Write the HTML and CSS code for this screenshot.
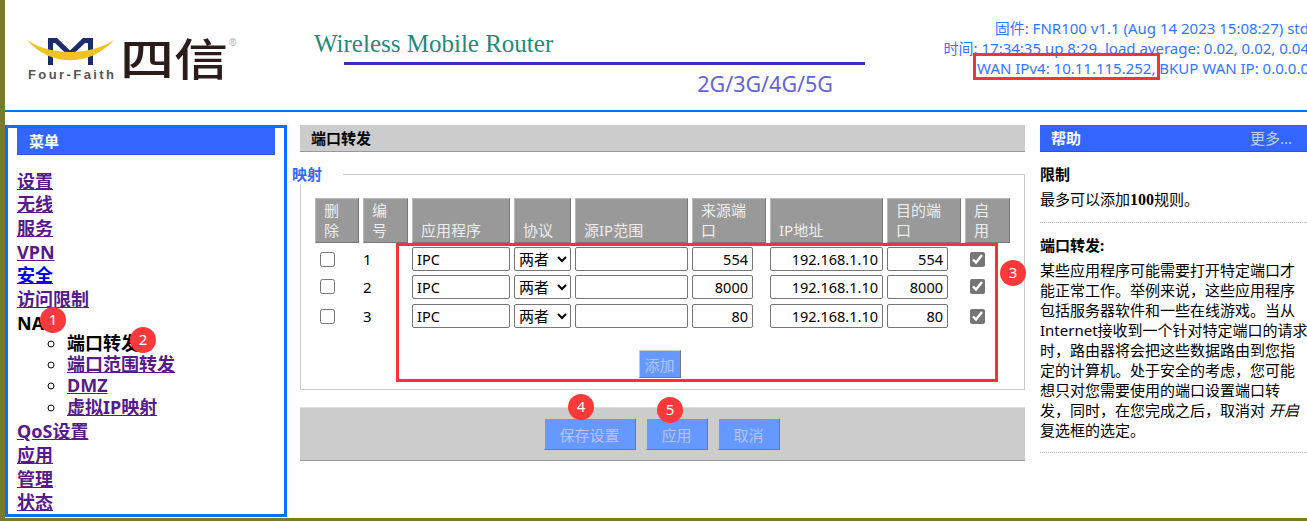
FILE: index.html

```html
<!DOCTYPE html>
<html lang="zh-CN">
<head>
    <meta charset="UTF-8">
    <meta name="viewport" content="width=device-width, initial-scale=1.0">
    <title>端口转发</title>
    <link rel="stylesheet" href="styles.css">
</head>
<body>
<div class="page">

    <!-- 顶部 -->
    <div class="top">
        <svg class="logo" width="240" height="110" viewBox="0 0 240 110">
            <path d="M50.500 65V40.500H56L70 54L84 40.500H90.500V65" fill="none" stroke="#1c2a6e" stroke-width="5"/>
            <path d="M27 40C50 67 90 67 114 40C90 56 50 56 27 40Z" fill="#efc322"/>
            <text class="logo-en" x="28" y="79" textLength="86">Four-Faith</text>
            <text class="logo-cn" x="120" y="76" textLength="108" lengthAdjust="spacingAndGlyphs">四信</text>
            <text class="logo-r" x="229" y="46">®</text>
        </svg>
        <div class="banner">
            <div class="banner-title">Wireless Mobile Router</div>
            <div class="banner-rule"></div>
            <div class="banner-sub">2G/3G/4G/5G</div>
        </div>
        <div class="status">
            <div>固件: FNR100 v1.1 (Aug 14 2023 15:08:27) std</div>
            <div>时间: 17:34:35 up 8:29, load average: 0.02, 0.02, 0.04</div>
            <div>WAN IPv4: 10.11.115.252, BKUP WAN IP: 0.0.0.0</div>
        </div>
    </div>

    <div class="content">

        <!-- 菜单 -->
        <div class="side">
            <div class="side-head">菜单</div>
            <div class="nav">
                <div><a href="#">设置</a></div>
                <div><a href="#">无线</a></div>
                <div><a href="#">服务</a></div>
                <div><a href="#">VPN</a></div>
                <div><a href="#" class="fresh">安全</a></div>
                <div><a href="#">访问限制</a></div>
                <div>NAT</div>
                <ul>
                    <li>端口转发</li>
                    <li><a href="#">端口范围转发</a></li>
                    <li><a href="#">DMZ</a></li>
                    <li><a href="#">虚拟IP映射</a></li>
                </ul>
                <div><a href="#">QoS设置</a></div>
                <div><a href="#">应用</a></div>
                <div><a href="#">管理</a></div>
                <div><a href="#">状态</a></div>
            </div>
        </div>

        <!-- 主要内容 -->
        <div class="main">
            <div class="main-head">端口转发</div>
            <fieldset class="box">
                <legend>映射</legend>
                <table class="rules">
                    <tr>
                        <th class="c-del">删<br>除</th>
                        <th class="c-num">编<br>号</th>
                        <th class="c-app">应用程序</th>
                        <th class="c-proto">协议</th>
                        <th class="c-src">源IP范围</th>
                        <th class="c-port">来源端<br>口</th>
                        <th class="c-ip">IP地址</th>
                        <th class="c-port">目的端<br>口</th>
                        <th class="c-on">启<br>用</th>
                    </tr>
                    <tr>
                        <td><input type="checkbox" class="chk"></td>
                        <td class="num">1</td>
                        <td><input class="txt w-app" value="IPC"></td>
                        <td><select class="sel"><option>两者</option></select></td>
                        <td><input class="txt w-src"></td>
                        <td><input class="txt w-port right" value="554"></td>
                        <td><input class="txt w-src right" value="192.168.1.10"></td>
                        <td><input class="txt w-port right" value="554"></td>
                        <td><input type="checkbox" class="chk" checked></td>
                    </tr>
                    <tr class="row-tall">
                        <td><input type="checkbox" class="chk"></td>
                        <td class="num">2</td>
                        <td><input class="txt w-app" value="IPC"></td>
                        <td><select class="sel"><option>两者</option></select></td>
                        <td><input class="txt w-src"></td>
                        <td><input class="txt w-port right" value="8000"></td>
                        <td><input class="txt w-src right" value="192.168.1.10"></td>
                        <td><input class="txt w-port right" value="8000"></td>
                        <td><input type="checkbox" class="chk" checked></td>
                    </tr>
                    <tr>
                        <td><input type="checkbox" class="chk"></td>
                        <td class="num">3</td>
                        <td><input class="txt w-app" value="IPC"></td>
                        <td><select class="sel"><option>两者</option></select></td>
                        <td><input class="txt w-src"></td>
                        <td><input class="txt w-port right" value="80"></td>
                        <td><input class="txt w-src right" value="192.168.1.10"></td>
                        <td><input class="txt w-port right" value="80"></td>
                        <td><input type="checkbox" class="chk" checked></td>
                    </tr>
                </table>
                <div class="add-row"><button class="btn btn-add">添加</button></div>
            </fieldset>
            <div class="actions">
                <button class="btn btn-save">保存设置</button>
                <button class="btn btn-small">应用</button>
                <button class="btn btn-small">取消</button>
            </div>
        </div>

        <!-- 帮助 -->
        <div class="help">
            <div class="help-head"><span>帮助</span><span class="more">更多...</span></div>
            <div class="help-block">
                <div class="help-title">限制</div>
                <div>最多可以添加<b class="serif">100</b>规则。</div>
            </div>
            <div class="help-block">
                <div class="help-title">端口转发:</div>
                <div class="help-text">某些应用程序可能需要打开特定端口才<br>能正常工作。举例来说，这些应用程序<br>包括服务器软件和一些在线游戏。当从<br>Internet接收到一个针对特定端口的请求<br>时，路由器将会把这些数据路由到您指<br>定的计算机。处于安全的考虑，您可能<br>想只对您需要使用的端口设置端口转<br>发，同时，在您完成之后，取消对 <i>开启</i><br>复选框的选定。</div>
            </div>
        </div>
    </div>
</div>

<!-- 标注 -->
<div class="mark mark-wan"></div>
<div class="mark mark-table"></div>
<div class="dot dot-1">1</div>
<div class="dot dot-2">2</div>
<div class="dot dot-3">3</div>
<div class="dot dot-4">4</div>
<div class="dot dot-5">5</div>

</body>
</html>
```

FILE: styles.css

```css
html, body {
    height: 100%;
    overflow: hidden;
}
body {
    margin: 0;
    background: #7a7a2e;
    font-family: "Noto Sans", "Noto Sans CJK SC", sans-serif;
    font-size: 15px;
    color: #000;
}
.page {
    position: relative;
    margin-left: 5px;
    height: 518px;
    background: #fff;
    overflow: hidden;
}

/* 顶部 */
.top {
    display: flex;
    height: 110px;
    border-bottom: 2px solid #0072ff;
}
.logo {
    flex: none;
    margin-left: -5px;
}
.logo-en {
    font-family: "Liberation Sans", sans-serif;
    font-size: 13px;
    font-weight: 700;
    fill: #555;
}
.logo-cn {
    font-family: "Noto Sans CJK SC", sans-serif;
    font-size: 44px;
    font-weight: 500;
    fill: #2a1c1a;
}
.logo-r {
    font-family: "Liberation Sans", sans-serif;
    font-size: 10px;
    fill: #aaa;
}
.banner {
    flex: none;
    width: 551px;
    margin-left: 74px;
    padding-top: 30px;
}
.banner-title {
    font-family: "Liberation Serif", serif;
    font-size: 25px;
    line-height: 28px;
    color: #1f8a78;
}
.banner-rule {
    height: 3px;
    margin: 4px 0 0 30px;
    background: #3a2fb8;
}
.banner-sub {
    margin-top: 5px;
    padding-right: 32px;
    text-align: right;
    font-size: 21.5px;
    line-height: 28px;
    color: #6464d8;
}
.status {
    flex: none;
    width: 460px;
    margin-left: -16px;
    padding-top: 18px;
    text-align: right;
    white-space: nowrap;
    font-size: 15px;
    line-height: 20px;
    color: #2f78ff;
}

/* 三栏 */
.content {
    display: flex;
    padding-top: 13px;
}

/* 菜单 */
.side {
    flex: none;
    box-sizing: border-box;
    width: 282px;
    height: 392px;
    border: 3px solid #0072ff;
    padding: 0 9px;
}
.side-head, .help-head {
    box-sizing: border-box;
    height: 27px;
    background: #3366ff;
    border-bottom: 1px solid #2a52d8;
    color: #fff;
    font-size: 15px;
    font-weight: 700;
    line-height: 26px;
}
.side-head {
    padding-left: 12px;
}
.nav {
    margin-top: 14.5px;
    font-size: 18px;
    font-weight: 700;
    line-height: 23.7px;
}
.nav a {
    color: #551a8b;
}
.nav a.fresh {
    color: #0000ee;
}
.nav ul {
    margin: -2.5px 0 2.5px;
    padding-left: 50px;
    list-style: circle;
}
.nav li {
    line-height: 21.2px;
}

/* 主要内容 */
.main {
    flex: none;
    width: 725px;
    margin-left: 13px;
}
.main-head {
    box-sizing: border-box;
    height: 27px;
    padding-left: 11px;
    background: #ccc;
    border-bottom: 1px solid #999;
    font-weight: 700;
    line-height: 26px;
}
.box {
    margin: 12px 0 0;
    padding: 10px 10px 11px;
    border: 1px solid #ccc;
    min-inline-size: 0;
}
.box legend {
    margin-left: -19px;
    padding: 0 21px 0 0;
    color: #3366ff;
    font-weight: 700;
    font-size: 15px;
    line-height: 20px;
}
.rules {
    border-spacing: 4px;
    table-layout: fixed;
}
.rules th {
    box-sizing: border-box;
    height: 45px;
    padding: 1px 0 2px 8px;
    background: #999;
    border: 1px solid;
    border-color: #bbb #777 #777 #bbb;
    color: #eee;
    font-weight: 400;
    line-height: 20px;
    text-align: left;
    vertical-align: bottom;
}
.rules td {
    padding: 0;
    height: 24px;
}
.rules .row-tall td {
    height: 25px;
    vertical-align: top;
    line-height: 24px;
}
.rules .row-tall .chk {
    margin-top: 4px;
}
.c-del { width: 44px; }
.c-num { width: 45px; }
.c-app { width: 98px; }
.c-proto { width: 57px; }
.c-src { width: 113px; }
.c-port { width: 74px; }
.c-ip { width: 113px; }
.c-on { width: 45px; }
.txt, .sel {
    display: block;
    box-sizing: border-box;
    height: 24px;
    margin: 0;
    border: 1px solid #767676;
    border-radius: 2px;
    background: #fff;
    font-family: "Noto Sans", "Noto Sans CJK SC", sans-serif;
    font-size: 14.5px;
}
.txt {
    padding: 0 4px;
}
.sel {
    width: 57px;
    padding: 0;
    font-size: 15px;
}
.w-app { width: 98px; }
.w-src { width: 113px; }
.w-port { width: 61px; }
.right { text-align: right; }
.chk {
    display: block;
    width: 15px;
    height: 15px;
    margin: 0 0 0 5px;
    accent-color: #767676;
}
.add-row {
    display: flex;
    justify-content: center;
    margin-top: 18px;
    padding-right: 6px;
}
.btn {
    box-sizing: border-box;
    height: 32px;
    padding: 0;
    background: #6699ff;
    border: 1px solid;
    border-color: #ccc #777 #777 #ccc;
    color: #b4c4ff;
    font-family: "Noto Sans", "Noto Sans CJK SC", sans-serif;
    font-size: 15px;
}
.btn-add { width: 42px; height: 28px; }
.btn-save { width: 92px; }
.btn-small { width: 62px; }
.actions {
    display: flex;
    justify-content: center;
    gap: 10px;
    box-sizing: border-box;
    height: 54px;
    margin-top: 17px;
    padding: 10px 2px 0 0;
    background: #ccc;
    border-top: 1px solid #ddd;
    border-bottom: 1px solid #999;
}

/* 帮助 */
.help {
    flex: none;
    width: 267px;
    margin-left: 15px;
    line-height: 20px;
}
.help-head {
    display: flex;
    justify-content: space-between;
    padding: 0 15px 0 11px;
}
.more {
    color: #c4ceff;
    font-weight: 400;
}
.help-block {
    padding: 12px 0 12px;
    border-bottom: 1px dotted #bbb;
}
.help-title {
    font-weight: 700;
    margin-bottom: 5px;
}
.help-text {
    white-space: nowrap;
}
.serif {
    font-family: "Liberation Serif", serif;
    font-size: 16px;
}

/* 标注 */
.mark {
    position: absolute;
    box-sizing: border-box;
    border: 3px solid #f03535;
}
.mark-wan {
    left: 973px;
    top: 53px;
    width: 187px;
    height: 27px;
}
.mark-table {
    left: 396px;
    top: 243px;
    width: 602px;
    height: 139px;
}
.dot {
    position: absolute;
    width: 26px;
    height: 26px;
    border-radius: 50%;
    background: #fa3a3a;
    color: #fff;
    font-size: 15px;
    line-height: 25px;
    text-align: center;
}
.dot-1 { left: 40px; top: 307px; }
.dot-2 { left: 130px; top: 327px; }
.dot-3 { left: 1000px; top: 260px; }
.dot-4 { left: 568px; top: 394px; }
.dot-5 { left: 657px; top: 397px; }
```
